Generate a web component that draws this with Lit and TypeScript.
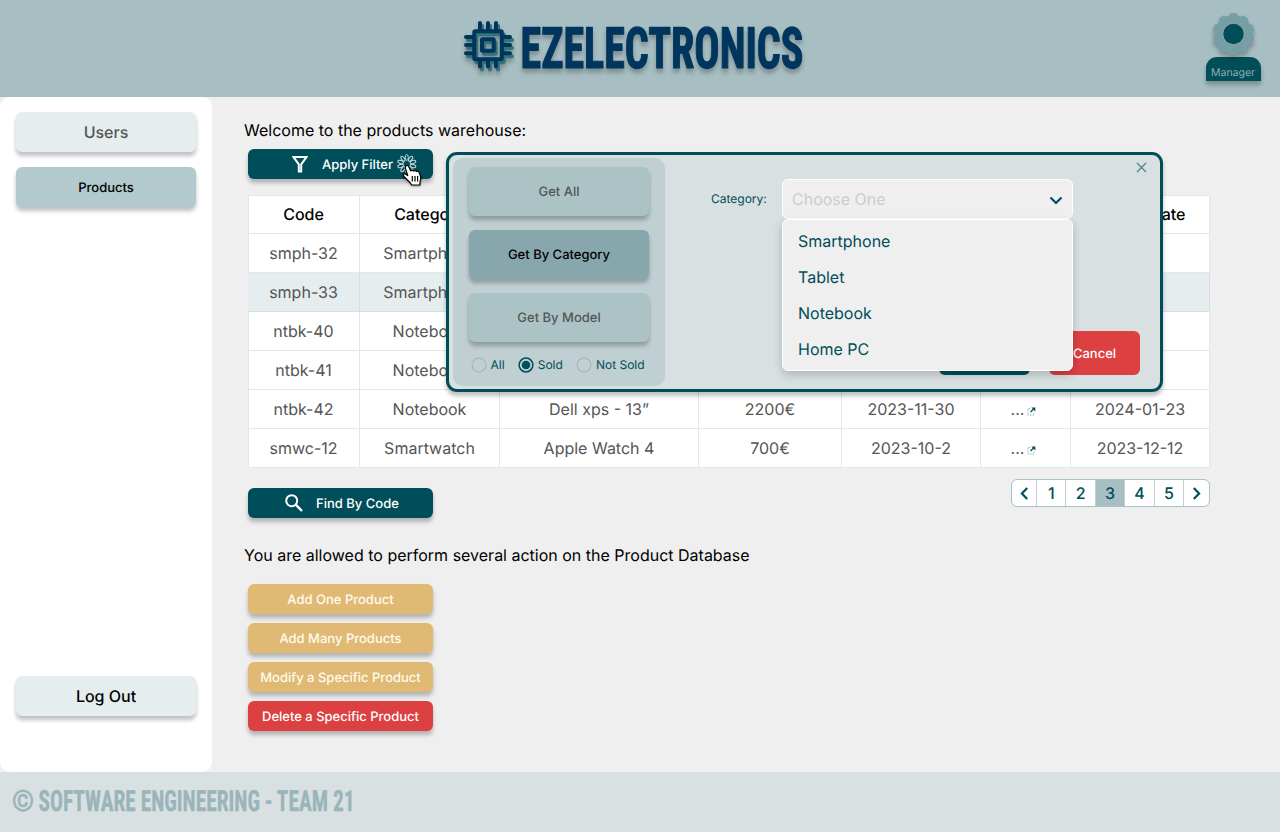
import { LitElement, html, svg, css } from "lit";
import { customElement } from "lit/decorators.js";
import { classMap } from "lit/directives/class-map.js";

const COLUMNS = ["Code", "Category", "", "", "", "", "Selling Date"];
const ROWS: string[][] = [
  ["smph-32", "Smartphone", "", "", "", "", ""],
  ["smph-33", "Smartphone", "", "", "", "", ""],
  ["ntbk-40", "Notebook", "", "", "", "", ""],
  ["ntbk-41", "Notebook", "", "", "", "", ""],
  ["ntbk-42", "Notebook", "Dell xps - 13”", "2200€", "2023-11-30", "...", "2024-01-23"],
  ["smwc-12", "Smartwatch", "Apple Watch 4", "700€", "2023-10-2", "...", "2023-12-12"],
];
const SELECTED_ROW = 1;
const DETAILS_COLUMN = 5;

@customElement("app-header")
class AppHeader extends LitElement {
  static styles = css`
    :host { display: grid; grid-template-columns: 1fr 342px 1fr; height: 97px; background: #a7bec2; }
    .brand { grid-column: 2; width: 342px; height: 97px; display: block; overflow: visible; }
    .chip { filter: drop-shadow(0 4px 2px rgba(0, 0, 0, 0.25)); }
    .wordmark {
      font: 700 57px "Liberation Sans Narrow", "Roboto Condensed", "Roboto", sans-serif;
      fill: #00355d; stroke: #00355d; stroke-width: 1.2;
      filter: drop-shadow(0 4px 2px rgba(0, 0, 0, 0.25));
    }
    .user { justify-self: end; width: 55px; padding: 12px 19px 0 0; display: flex; flex-direction: column; align-items: center; }
    .gear { display: block; width: 46px; height: 45px; overflow: visible; filter: drop-shadow(0 4px 2px rgba(0, 0, 0, 0.25)); }
    .role {
      width: 55px; height: 24px; box-sizing: border-box; padding: 9px 1px 0 0; text-align: center;
      font: 400 10.500px/13px Inter, sans-serif; color: #8eabb0; background: #004e59;
      border-radius: 11px 11px 0 0; box-shadow: 0 4px 4px rgba(0, 0, 0, 0.25); text-rendering: geometricPrecision;
    }
  `;
  private chip(color: string, dx: number, dy: number) {
    return svg`<g transform="translate(${dx} ${dy})" fill="none" stroke=${color} stroke-width="4" stroke-linecap="round">
      <path d="M480 23V30M488 23V30M496 23V30M480 60V66.500M488 60V66.500M496 60V66.500M466 37H473M466 45H473M466 53.300H473M503 37H510M503 45H510M503 53.300H510"/>
      <rect x="474.300" y="31.200" width="27.500" height="28" rx="1"/>
      <rect x="482" y="39.200" width="11.700" height="11.500" rx="0.500"/>
    </g>`;
  }
  render() {
    const teeth = [0, 36, 72, 108, 144, 180, 216, 252, 288, 324];
    return html`
      <svg class="brand" viewBox="469 0 342 97">
        <g class="chip">
          ${this.chip("#317379", 2, 3)}
          ${this.chip("#00355d", 0, 0)}
        </g>
        <text class="wordmark" x="520.500" y="67.6" textLength="283" lengthAdjust="spacingAndGlyphs">EZELECTRONICS</text>
      </svg>
      <div class="user">
        <svg class="gear" viewBox="0 0 46 45">
          <circle cx="22.500" cy="22" r="19" fill="#759fa5" />
          ${teeth.map((a) => svg`<path d="M18 4.500L19.500 1H25.500L27 4.500Z" fill="#759fa5" transform="rotate(${a} 22.5 22)"/>`)}
          <circle cx="22.500" cy="22" r="11.300" fill="#8d9fa2" />
          <circle cx="22.500" cy="22" r="10.200" fill="#004e59" />
        </svg>
        <div class="role">Manager</div>
      </div>
    `;
  }
}

@customElement("app-sidebar")
class AppSidebar extends LitElement {
  static styles = css`
    :host {
      display: flex; flex-direction: column; gap: 15px; box-sizing: border-box; width: 212px;
      padding: 15px 16px 56px; background: #fff; border-radius: 10px; text-rendering: geometricPrecision;
    }
    .item {
      height: 40px; text-align: center; border-radius: 6px; background: #e5edee;
      font: 500 16px/40px Inter, sans-serif; color: #555; box-shadow: 0 4px 4px rgba(0, 0, 0, 0.25);
    }
    .current { background: #b2c9cd; color: #000; font-size: 13px; line-height: 42px; }
    .logout { margin-top: auto; color: #000; }
  `;
  render() {
    return html`
      <div class="item">Users</div>
      <div class="item current">Products</div>
      <div class="item logout">Log Out</div>
    `;
  }
}

@customElement("product-table")
class ProductTable extends LitElement {
  static styles = css`
    :host { display: block; text-rendering: geometricPrecision; }
    .grid {
      display: grid; grid-template-columns: 112px 140px 199px 143px 139px 90px 139px;
      grid-auto-rows: 39px; width: 962px; font: 400 16px/38px Inter, sans-serif; color: #555;
      box-shadow: inset 1px 1px #dfe9ea; background: #fff;
    }
    .cell {
      box-sizing: border-box; border-right: 1px solid #dfe9ea; border-bottom: 1px solid #dfe9ea;
      text-align: center; white-space: nowrap;
    }
    .head { color: #000; font-weight: 500; }
    .selected { background: #e5edee; border-color: #d3e0e2; }
    .details { display: flex; justify-content: center; align-items: center; gap: 3px; padding-right: 4px; }
    .open { width: 9px; height: 9px; margin-top: 4px; }
  `;
  render() {
    return html`
      <div class="grid">
        ${COLUMNS.map((name) => html`<div class="cell head">${name}</div>`)}
        ${ROWS.map((row, r) => row.map((value, c) => {
          const details = c === DETAILS_COLUMN && value !== "";
          return html`<div class=${classMap({ cell: true, selected: r === SELECTED_ROW, details })}>${value}${details
            ? html`<svg class="open" viewBox="0 0 9 9" fill="none">
                <path d="M3 1.500H1V8H7V5.500" stroke="#9db9bd" stroke-dasharray="1.600 1" />
                <path d="M3.500 5L7 1.800" stroke="#004e59" stroke-width="1.300" />
                <path d="M4.300 0.500H8.300V4.500Z" fill="#004e59" />
              </svg>`
            : ""}</div>`;
        }))}
      </div>
    `;
  }
}

@customElement("page-switcher")
class PageSwitcher extends LitElement {
  static styles = css`
    :host { display: flex; box-sizing: border-box; width: 199px; height: 28px; border: 1px solid #a7c3c7; border-radius: 6px; background: #fff; overflow: hidden; }
    .page {
      box-sizing: border-box; flex: 1 1 0; display: flex; align-items: center; justify-content: center; text-rendering: geometricPrecision;
      font: 500 16px/26px Inter, sans-serif; color: #004e59; border-right: 1px solid #bdd0d3;
    }
    .arrow { flex: 0 0 25px; }
    .page:last-child { border-right: 0; }
    .current { background: #a7bec2; }
    .icon { width: 9px; height: 13px; fill: none; stroke: #004e59; stroke-width: 2.2; }
  `;
  render() {
    return html`
      <div class="page arrow"><svg class="icon" viewBox="0 0 9 13"><path d="M7.200 1L1.900 6.500L7.200 12" /></svg></div>
      ${[1, 2, 3, 4, 5].map((n) => html`<div class=${classMap({ page: true, current: n === 3 })}>${n}</div>`)}
      <div class="page arrow"><svg class="icon" viewBox="0 0 9 13"><path d="M1.800 1L7.100 6.500L1.800 12" /></svg></div>
    `;
  }
}

@customElement("filter-dialog")
class FilterDialog extends LitElement {
  static styles = css`
    :host {
      box-sizing: border-box; width: 717px; height: 240px; display: flex; padding: 3px 0 0 4px;
      border: 3px solid #004e59; border-radius: 11px; background: #d8e0e1; text-rendering: geometricPrecision;
      box-shadow: 0 4px 4px rgba(0, 0, 0, 0.25); font-family: Inter, sans-serif;
    }
    .modes {
      box-sizing: border-box; width: 212px; height: 228px; padding: 9px 16px 0 16px; border-radius: 10px;
      background: #c0cfd2; display: flex; flex-direction: column; gap: 14px;
    }
    .mode {
      height: 49px; text-align: center; border-radius: 6px; background: #acc3c6; color: #555;
      font: 500 13px/51px Inter, sans-serif; box-shadow: 0 4px 4px rgba(0, 0, 0, 0.25);
    }
    .chosen { background: #87a7ac; color: #000; }
    .states { display: flex; gap: 13.600px; padding: 1px 0 0 2px; font: 400 12px/15px Inter, sans-serif; color: #004e59; white-space: nowrap; }
    .state { display: flex; align-items: center; gap: 3.500px; }
    .radio { width: 16px; height: 16px; margin: -1px 0; }
    .fields { flex: 1; position: relative; }
    .close { position: absolute; right: 13px; top: 3.500px; width: 11px; height: 11px; }
    .row { display: flex; align-items: center; padding: 21px 0 0 46px; }
    .label { width: 71px; font: 400 12px/15px Inter, sans-serif; color: #004e59; margin-top: -1px; }
    .select {
      box-sizing: border-box; width: 291px; height: 40px; padding: 0 9px 0 9px; display: flex; align-items: center;
      justify-content: space-between; border: 1px solid #fff; border-radius: 6px; background: #efefef;
      font: 400 16px/20px Inter, sans-serif; color: #ccc;
    }
    .chevron { width: 14px; height: 9px; margin-top: 2px; }
    .menu {
      position: absolute; z-index: 1; left: 117px; top: 61px; box-sizing: border-box; width: 291px; height: 152px;
      padding: 3px 15px; border: 1px solid #fff; border-radius: 6px; background: #efefef;
      font: 400 16px/36px Inter, sans-serif; color: #004e59; box-shadow: 0 4px 10px rgba(0, 0, 0, 0.2);
    }
    .actions { display: flex; justify-content: flex-end; gap: 19px; padding: 112px 20px 0 0; }
    .action { width: 91px; height: 44px; border-radius: 6px; text-align: center; color: #fff; font: 500 13px/46px Inter, sans-serif; }
    .confirm { background: #004e59; }
    .cancel { background: #dd4041; }
  `;
  private radio(label: string, on: boolean) {
    return html`<div class="state">
      <svg class="radio" viewBox="0 0 16 16">
        <circle cx="8" cy="8" r="6.900" fill="none" stroke=${on ? "#004e59" : "#a9b5b7"} stroke-width=${on ? 1.5 : 1.2} />
        ${on ? svg`<circle cx="8" cy="8" r="4.300" fill="#004e59"/>` : ""}
      </svg>${label}
    </div>`;
  }
  render() {
    return html`
      <div class="modes">
        <div class="mode">Get All</div>
        <div class="mode chosen">Get By Category</div>
        <div class="mode">Get By Model</div>
        <div class="states">${this.radio("All", false)}${this.radio("Sold", true)}${this.radio("Not Sold", false)}</div>
      </div>
      <div class="fields">
        <svg class="close" viewBox="0 0 11 11"><path d="M1 1L10 10M10 1L1 10" stroke="#4f858c" stroke-width="1.300" /></svg>
        <div class="row">
          <div class="label">Category:</div>
          <div class="select">Choose One
            <svg class="chevron" viewBox="0 0 14 9"><path d="M1.500 1.500L7 7L12.500 1.500" fill="none" stroke="#004e59" stroke-width="2.200" /></svg>
          </div>
        </div>
        <div class="menu">
          <div>Smartphone</div><div>Tablet</div><div>Notebook</div><div>Home PC</div>
        </div>
        <div class="actions">
          <div class="action confirm"></div>
          <div class="action cancel">Cancel</div>
        </div>
      </div>
    `;
  }
}

@customElement("app-root")
class AppRoot extends LitElement {
  static styles = css`
    :host { display: flex; flex-direction: column; width: 1280px; height: 832px; position: relative; overflow: hidden; background: #efefef; font-family: Inter, sans-serif; text-rendering: geometricPrecision; }
    .body { display: flex; height: 675px; }
    .main { box-sizing: border-box; flex: 1; padding: 23px 70px 0 36px; display: flex; flex-direction: column; }
    .title { margin-left: -4px; font: 400 16px/20px Inter, sans-serif; color: #000; }
    .button {
      box-sizing: border-box; width: 185px; height: 30px; border-radius: 6px; display: flex; align-items: center;
      justify-content: center; font: 500 13px/32px Inter, sans-serif; color: #fff; box-shadow: 0 4px 4px rgba(0, 0, 0, 0.25);
      padding-top: 1px;
    }
    .dark { background: #004e59; justify-content: flex-start; }
    .filter { margin: 9px 0 16px; padding-left: 44px; gap: 14px; }
    .find { margin-top: 20px; padding-left: 37px; gap: 13px; }
    .funnel { width: 16px; height: 17px; margin-top: -1px; }
    .lens { width: 18px; height: 18px; margin-top: -1px; }
    .below { display: flex; justify-content: space-between; height: 77px; }
    .pager { margin-top: 11px; }
    .actions { display: flex; flex-direction: column; gap: 9px; padding-top: 19px; }
    .amber { background: #e0ba74; color: #fffaf0; }
    .red { background: #dd4041; }
    .footer { height: 60px; background: #d8e0e1; }
    .credits { display: block; width: 1280px; height: 60px; overflow: visible; }
    .creditText { font: 700 29.3px "Liberation Sans Narrow", "Roboto Condensed", "Roboto", sans-serif; fill: #9ab5ba; stroke: #9ab5ba; stroke-width: 0.300; }
    .copy { font-weight: 400; stroke-width: 0.700; }
    .dialog { position: absolute; left: 446px; top: 152px; }
    .cursor { position: absolute; left: 395px; top: 152px; width: 32px; height: 36px; overflow: visible; }
    .hand { filter: drop-shadow(0 1px 1px rgba(0, 0, 0, 0.35)); }
  `;
  render() {
    const rays = [0, 36, 72, 108, 144, 180, 216, 252, 288, 324];
    return html`
      <app-header></app-header>
      <div class="body">
        <app-sidebar></app-sidebar>
        <div class="main">
          <div class="title">Welcome to the products warehouse:</div>
          <div class="button dark filter">
            <svg class="funnel" viewBox="0 0 16 17"><path d="M1.500 1H14.500L9.200 8.300V15.500H6.800V8.300Z" fill="none" stroke="#fff" stroke-width="2" /></svg>
            Apply Filter
          </div>
          <product-table></product-table>
          <div class="below">
            <div class="button dark find">
              <svg class="lens" viewBox="0 0 18 18" fill="none" stroke="#fff" stroke-width="2"><circle cx="6.700" cy="6.700" r="5.500" /><path d="M10.700 10.700L17 17" stroke-width="2.400" /></svg>
              Find By Code
            </div>
            <page-switcher class="pager"></page-switcher>
          </div>
          <div class="title">You are allowed to perform several action on the Product Database</div>
          <div class="actions">
            <div class="button amber">Add One Product</div>
            <div class="button amber">Add Many Products</div>
            <div class="button amber">Modify a Specific Product</div>
            <div class="button red">Delete a Specific Product</div>
          </div>
        </div>
      </div>
      <div class="footer">
        <svg class="credits" viewBox="0 0 1280 60">
          <text class="creditText copy" x="12" y="39.200" textLength="22" lengthAdjust="spacingAndGlyphs">©</text>
          <text class="creditText" x="38.500" y="39.200" textLength="316" lengthAdjust="spacingAndGlyphs">SOFTWARE ENGINEERING - TEAM 21</text>
        </svg>
      </div>
      <filter-dialog class="dialog"></filter-dialog>
      <svg class="cursor" viewBox="0 0 32 36">
        ${rays.map((a) => svg`<ellipse cx="11.8" cy="5.500" rx="1.500" ry="2.900" fill="#004e59" stroke="#c5d8da" stroke-width="1" transform="rotate(${a} 11.8 12)"/>`)}
        <path class="hand" d="M11.300 14.200C12.100 13.200 13.500 13.300 14.100 14.500L16.400 18.900C17.200 18 18.700 18.100 19.300 19.100C20.200 18.300 21.500 18.500 22.100 19.500C23.200 18.900 24.300 19.500 24.700 20.600L26.100 24.500C26.700 26.800 26.100 28.200 25.500 30L25.400 33H17.300C16.500 30.900 14.100 29 12.100 27.200C10.500 25.600 8.900 24.300 8.700 23.100C8.700 21.700 10.500 21.400 11.700 22.400L13.200 23.500L10.900 16.300C10.600 15.400 10.700 14.700 11.300 14.200Z" fill="#fff" stroke="#000" stroke-width="1.200" stroke-linejoin="round" transform="translate(-0.5 0)" />
        <path d="M17.300 24V29.500M20 24V29.500M22.600 24V29.500" stroke="#000" stroke-width="1.200" />
      </svg>
    `;
  }
}
